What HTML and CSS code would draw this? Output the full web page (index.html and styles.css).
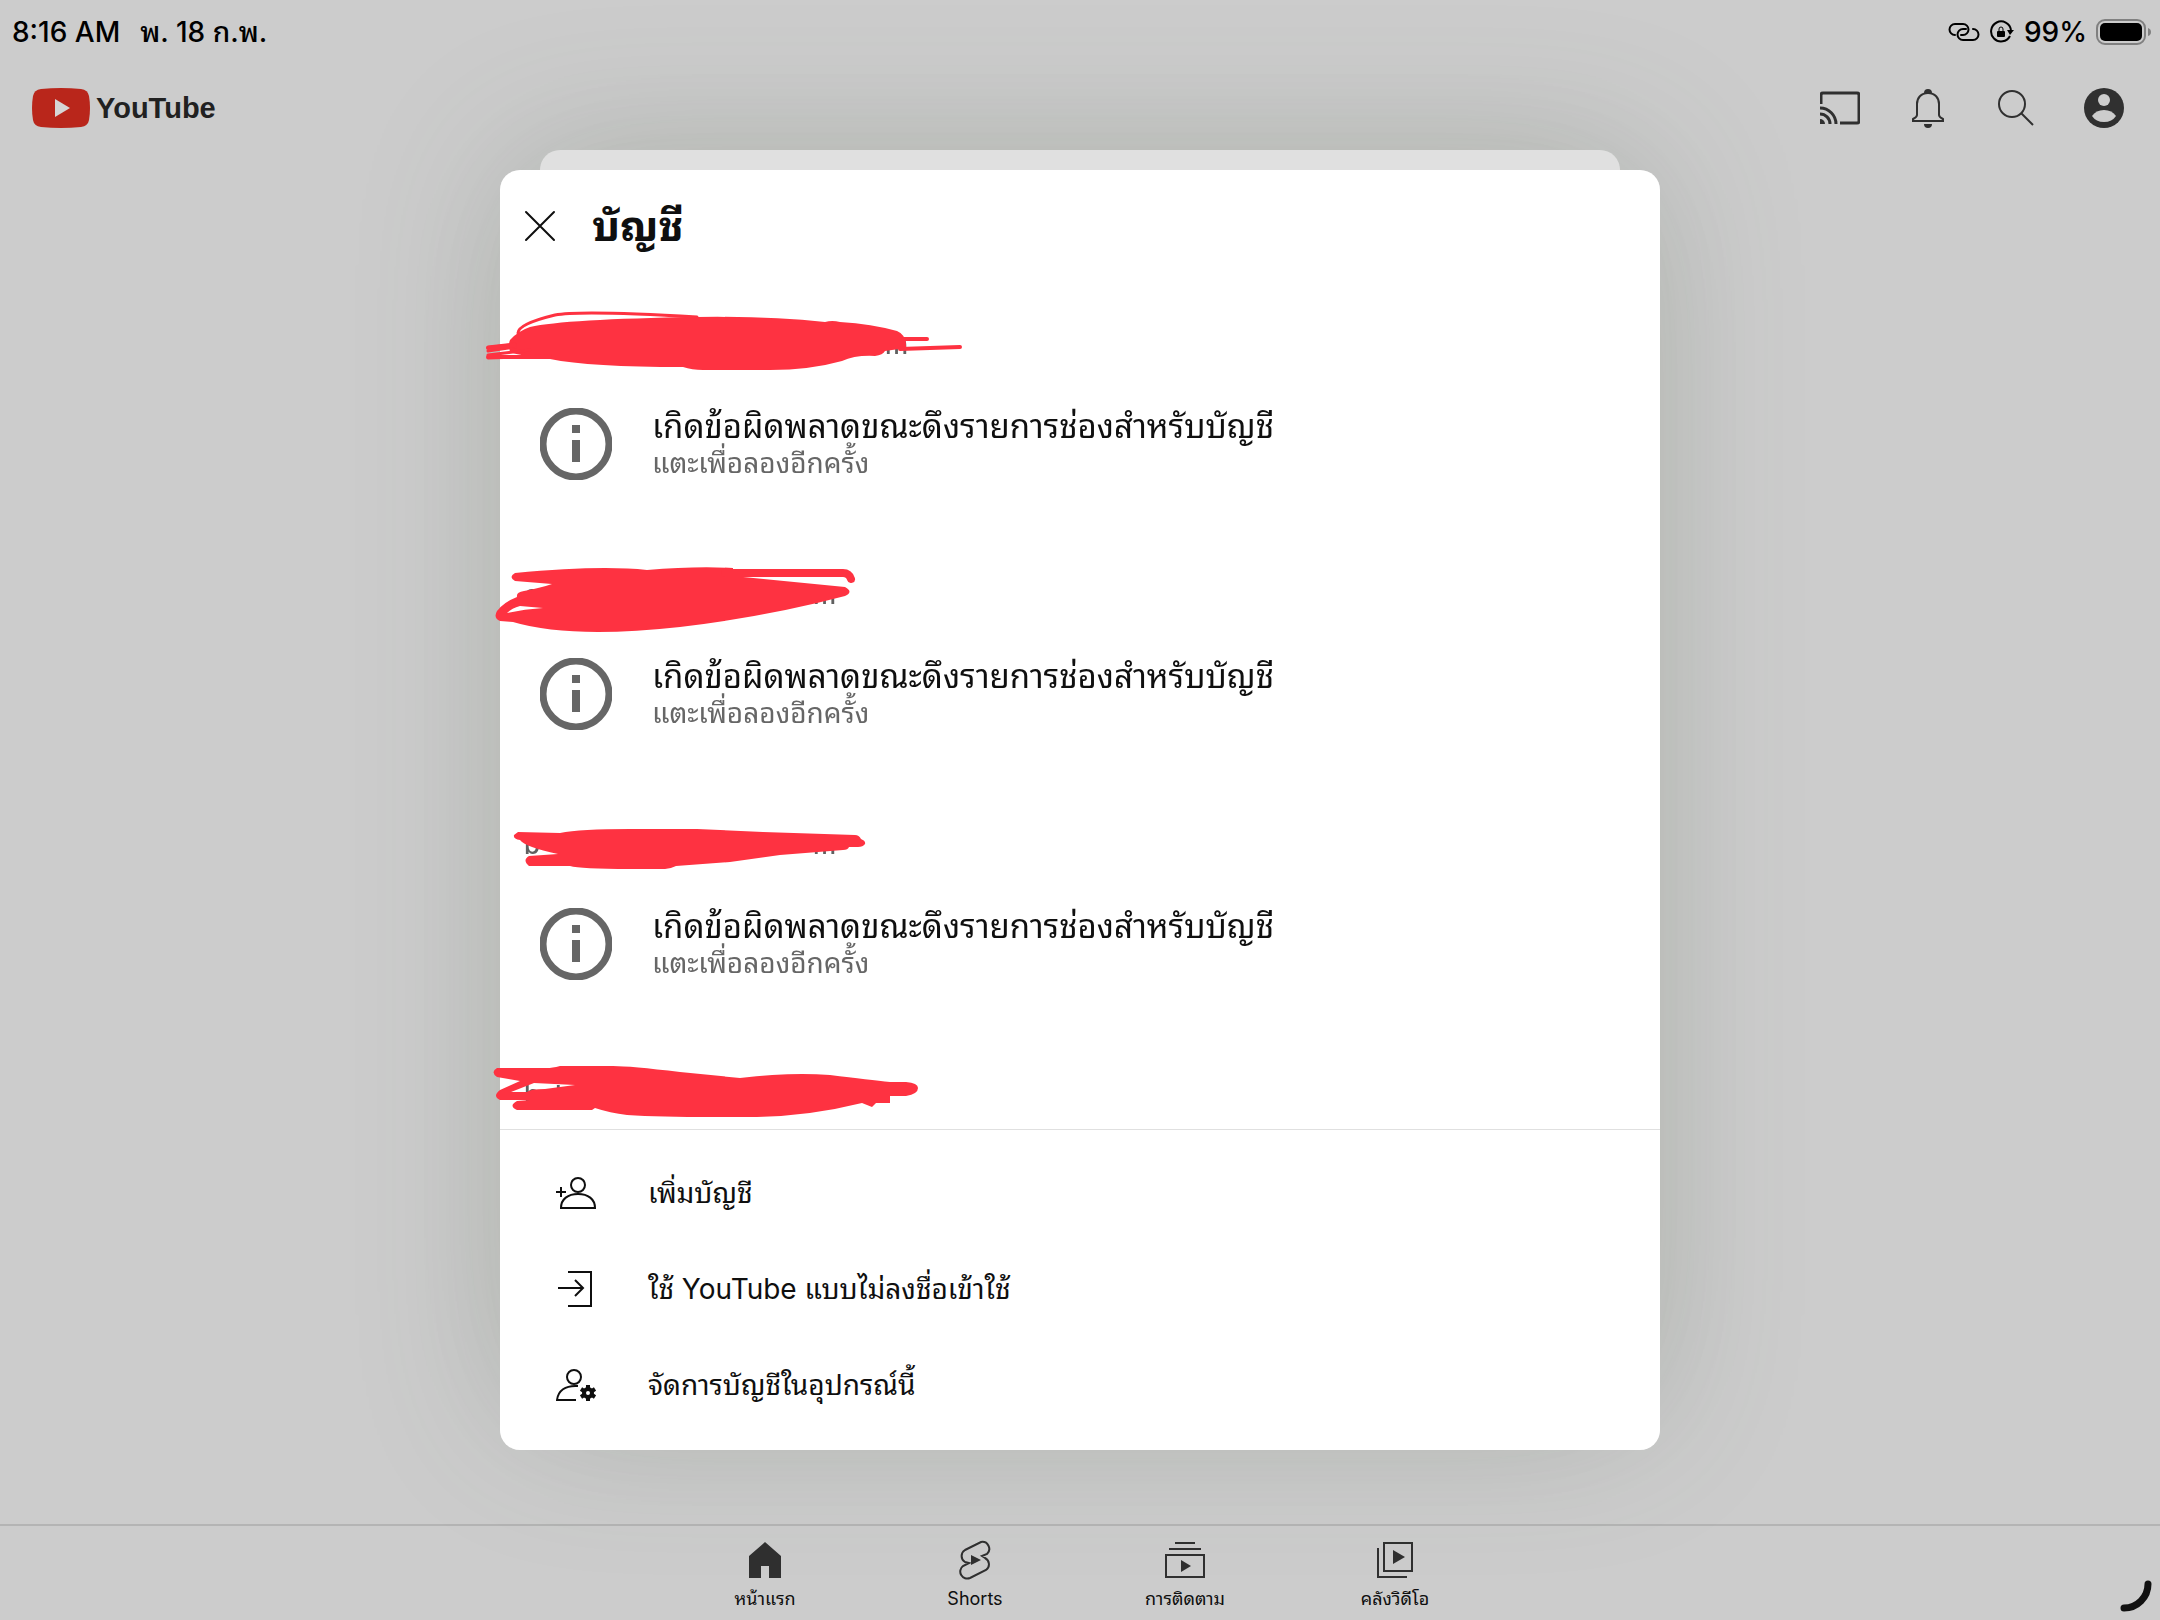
FILE: index.html
```html
<!DOCTYPE html>
<html lang="th">
<head>
  <meta charset="UTF-8">
  <meta name="viewport" content="width=device-width, initial-scale=1">
  <title>YouTube - บัญชี</title>
  <link rel="stylesheet" href="styles.css">
</head>
<body>

<!-- status bar -->
<div class="status">
  <div class="status-side status-left">
    <span>8:16 AM</span>
    <span>พ. 18 ก.พ.</span>
  </div>
  <div class="status-side status-right">
    <svg width="32" height="20" viewBox="0 0 32 20" fill="none" stroke="#000" stroke-width="2" stroke-linecap="round">
      <path d="M7 13A5 5 0 0 1 7 2H15A5 5 0 0 1 15 13H13"/>
      <path d="M25 7A5 5 0 0 1 25 18H15A5 5 0 0 1 15 7H18"/>
    </svg>
    <svg width="26" height="24" viewBox="0 0 26 24">
      <path d="M21 16A10 10 0 1 1 22 10" fill="none" stroke="#000" stroke-width="2"/>
      <path d="M18 10H25L21 15Z"/>
      <rect x="8" y="11" width="8" height="6" rx="1"/>
      <path d="M10 11V9a2 2 0 0 1 4 0v2" fill="none" stroke="#000" stroke-width="1"/>
    </svg>
    <span>99%</span>
    <svg width="56" height="26" viewBox="0 0 56 26">
      <rect x="1" y="1" width="48" height="24" rx="8" fill="none" stroke="#808080" stroke-width="2"/>
      <rect x="4" y="4" width="42" height="18" rx="5"/>
      <path d="M52 9Q55 10 55 13T52 17Z" fill="#808080"/>
    </svg>
  </div>
</div>

<!-- top bar -->
<header class="topbar">
  <a class="logo" href="#">
    <svg width="58" height="40" viewBox="0 0 58 40">
      <path d="M9 1Q29-1 49 1Q56 2 57 8Q59 20 57 32Q56 38 49 39Q29 41 9 39Q2 38 1 32Q-1 20 1 8Q2 2 9 1Z" fill="#b9261b"/>
      <path d="M23 11L38 20L23 29Z" fill="#d6d6d6"/>
    </svg>
    <span>YouTube</span>
  </a>
  <div class="actions">
    <button type="button" aria-label="แคสต์">
      <svg width="40" height="40" viewBox="0 0 40 40" fill="none" stroke="#303030" stroke-width="3">
        <path d="M1 16V7Q1 5 3 5H37Q39 5 39 7V33Q39 35 37 35H20"/>
        <path d="M0 20A16 16 0 0 1 16 36M0 26A10 10 0 0 1 10 36"/>
        <path d="M0 31A5 5 0 0 1 5 36H0Z" fill="#303030" stroke="none"/>
      </svg>
    </button>
    <button type="button" aria-label="การแจ้งเตือน">
      <svg width="40" height="40" viewBox="0 0 40 40" fill="none" stroke="#303030" stroke-width="2">
        <path d="M20 5C13 5 9 10 9 16V27Q9 29 5 31V33H35V31Q31 29 31 27V16C31 10 27 5 20 5Z"/>
        <path d="M16 5A4 4 0 0 1 24 5ZM16 36H24A4 4 0 0 1 16 36Z" fill="#303030" stroke="none"/>
      </svg>
    </button>
    <button type="button" aria-label="ค้นหา">
      <svg width="40" height="40" viewBox="0 0 40 40" fill="none" stroke="#303030" stroke-width="2">
        <circle cx="16" cy="16" r="13"/>
        <path d="M25 25L37 37"/>
      </svg>
    </button>
    <button type="button" aria-label="บัญชี">
      <svg width="40" height="40" viewBox="0 0 40 40">
        <circle cx="20" cy="20" r="20" fill="#303030"/>
        <circle cx="20" cy="12" r="6" fill="#ccc"/>
        <path d="M8 28Q12 22 20 22T32 28Q28 34 20 34T8 28Z" fill="#ccc"/>
      </svg>
    </button>
  </div>
</header>

<main class="feed"></main>

<!-- bottom tabs -->
<nav class="tabs">
  <a class="tab" href="#">
    <svg width="40" height="40" viewBox="0 0 40 40" fill="#303030">
      <path d="M20 2L36 16V38H24V26H16V38H4V16Z"/>
    </svg>
    <span>หน้าแรก</span>
  </a>
  <a class="tab" href="#">
    <svg width="40" height="40" viewBox="0 0 40 40">
      <path d="M10 10L26 2A7 7 0 0 1 32 14L27 16L30 18A7 7 0 0 1 31 30L15 38A7 7 0 0 1 8 26L14 23L10 22A7 7 0 0 1 10 10Z" fill="none" stroke="#303030" stroke-width="2"/>
      <path d="M16 15L26 20L16 25Z" fill="#303030"/>
    </svg>
    <span>Shorts</span>
  </a>
  <a class="tab" href="#">
    <svg width="40" height="40" viewBox="0 0 40 40">
      <path d="M10 3H30M4 9H36M1 15H39V37H1Z" fill="none" stroke="#303030" stroke-width="2"/>
      <path d="M16 20L26 26L16 32Z" fill="#303030"/>
    </svg>
    <span>การติดตาม</span>
  </a>
  <a class="tab" href="#">
    <svg width="40" height="40" viewBox="0 0 40 40">
      <path d="M9 3H37V31H9ZM3 8V37H32" fill="none" stroke="#303030" stroke-width="2"/>
      <path d="M18 10L30 17L18 24Z" fill="#303030"/>
    </svg>
    <span>คลังวิดีโอ</span>
  </a>
</nav>

<svg class="corner" width="32" height="32" viewBox="0 0 32 32">
  <path d="M28 4A24 24 0 0 1 4 28" fill="none" stroke="#111" stroke-width="7" stroke-linecap="round"/>
</svg>

<!-- accounts sheet -->
<div class="overlay">
  <div class="stack">
    <section class="sheet" role="dialog" aria-labelledby="sheetTitle">
      <div class="sheet-head">
        <button type="button" aria-label="ปิด">
          <svg width="32" height="32" viewBox="0 0 32 32" fill="none" stroke="#0f0f0f" stroke-width="2" stroke-linecap="round">
            <path d="M2 2L30 30M30 2L2 30"/>
          </svg>
        </button>
        <h1 id="sheetTitle">บัญชี</h1>
      </div>

      <div class="account">
        <p class="email email-long"><span>p</span><span>m</span></p>
        <svg class="marker" width="520" height="80" viewBox="0 0 520 80">
          <path d="M40 30Q48 21 60 17Q95 9 227 7Q300 6 355 12Q362 10 370 12Q402 14 427 21Q437 25 436 38L415 41Q413 45 405 46Q385 45 372 51Q340 60 300 60H233Q222 60 213 57Q120 57 80 49Q50 46 40 42Q38 34 40 30Z"/>
          <path class="line thin" d="M48 23Q48 14 85 5Q110 0 227 7M18 37L45 34M18 41L45 37M18 48L80 46M18 45L60 40"/>
          <path class="line" d="M433 29H457M430 39L490 37M18 38L45 35M18 47L80 47"/>
        </svg>
        <button type="button" class="retry">
          <svg width="72" height="72" viewBox="0 0 72 72">
            <circle cx="36" cy="36" r="33" fill="none" stroke="#666" stroke-width="7"/>
            <path d="M32 17H40V25H32ZM32 32H40V54H32Z" fill="#666"/>
          </svg>
          <span class="retry-text">
            <span class="retry-title">เกิดข้อผิดพลาดขณะดึงรายการช่องสำหรับบัญชี</span>
            <span class="retry-sub">แตะเพื่อลองอีกครั้ง</span>
          </span>
        </button>
      </div>

      <div class="account">
        <p class="email email-short"><span>e</span><span>m</span></p>
        <svg class="marker" width="520" height="80" viewBox="0 0 520 80">
          <path d="M45 13Q130 5 177 10Q225 6 263 8V16L375 27Q384 32 375 36Q300 56 210 67Q100 79 43 62L30 61Q23 58 27 51Q34 42 47 37Q46 32 54 31Q70 28 82 24L45 21Q38 17 45 13ZM37 53Q42 48 50 46L73 48Q55 49 37 53Z" fill-rule="evenodd"/>
          <path class="line thick" d="M255 13H373Q379 13 381 19"/>
        </svg>
        <button type="button" class="retry">
          <svg width="72" height="72" viewBox="0 0 72 72">
            <circle cx="36" cy="36" r="33" fill="none" stroke="#666" stroke-width="7"/>
            <path d="M32 17H40V25H32ZM32 32H40V54H32Z" fill="#666"/>
          </svg>
          <span class="retry-text">
            <span class="retry-title">เกิดข้อผิดพลาดขณะดึงรายการช่องสำหรับบัญชี</span>
            <span class="retry-sub">แตะเพื่อลองอีกครั้ง</span>
          </span>
        </button>
      </div>

      <div class="account">
        <p class="email email-short"><span>b</span><span>m</span></p>
        <svg class="marker" width="520" height="80" viewBox="0 0 520 80">
          <path d="M48 22L90 23Q110 19 160 19H227L293 22L385 25Q389 25 391 29Q396 31 395 34Q393 37 388 37H379Q378 40 373 40L310 45L260 52L206 56Q200 59 195 59H160Q110 59 100 56H59Q52 50 59 46L88 44Q55 37 50 30Q43 29 44 25Z"/>
        </svg>
        <button type="button" class="retry">
          <svg width="72" height="72" viewBox="0 0 72 72">
            <circle cx="36" cy="36" r="33" fill="none" stroke="#666" stroke-width="7"/>
            <path d="M32 17H40V25H32ZM32 32H40V54H32Z" fill="#666"/>
          </svg>
          <span class="retry-text">
            <span class="retry-title">เกิดข้อผิดพลาดขณะดึงรายการช่องสำหรับบัญชี</span>
            <span class="retry-sub">แตะเพื่อลองอีกครั้ง</span>
          </span>
        </button>
      </div>

      <div class="account account-last">
        <p class="email"><span>bal</span></p>
        <svg class="marker" width="520" height="80" viewBox="0 0 520 80">
          <path d="M27 8H77Q82 8 90 6H143Q160 6 210 12L270 18Q320 12 360 15Q400 20 420 22H436Q448 23 448 28Q448 34 436 36H420V43H406L402 47L392 43Q340 56 287 57H243Q190 57 157 55Q140 53 125 48L122 50H47Q38 46 47 41L60 40H30Q22 36 30 30L50 21L27 17Q20 12 27 8ZM41 32L64 23L105 25L75 29Q60 29 57 32Z" fill-rule="evenodd"/>
        </svg>
      </div>

      <div class="menu">
        <button type="button" class="menu-item">
          <svg width="40" height="40" viewBox="0 0 40 40" fill="none" stroke="#0f0f0f" stroke-width="2">
            <circle cx="22" cy="12" r="7"/>
            <path d="M5 35C5 26 12 21 22 21S39 26 39 35ZM5 14V24M0 19H10"/>
          </svg>
          <span>เพิ่มบัญชี</span>
        </button>
        <button type="button" class="menu-item">
          <svg width="40" height="40" viewBox="0 0 40 40" fill="none" stroke="#0f0f0f" stroke-width="2">
            <path d="M12 3H35V37H12M2 19H27M19 11L27 19L19 27"/>
          </svg>
          <span>ใช้ YouTube แบบไม่ลงชื่อเข้าใช้</span>
        </button>
        <button type="button" class="menu-item">
          <svg width="40" height="40" viewBox="0 0 40 40" fill="none" stroke="#0f0f0f" stroke-width="2">
            <circle cx="18" cy="12" r="7"/>
            <path d="M20 35H1C2 26 9 20 22 21"/>
            <circle cx="32" cy="28" r="4" stroke-width="4"/>
            <path d="M32 20V24M32 32V36M25 24L28 26M36 30L39 32M25 32L28 30M36 26L39 24" stroke-width="4"/>
          </svg>
          <span>จัดการบัญชีในอุปกรณ์นี้</span>
        </button>
      </div>
    </section>
  </div>
</div>

</body>
</html>
```
FILE: styles.css
```css
* {
  box-sizing: border-box;
}

body {
  margin: 0;
  min-height: 100vh;
  display: flex;
  flex-direction: column;
  background-color: #ccc;
  color: #0f0f0f;
  font-family: Inter, "Noto Sans Thai Looped", "Noto Sans Thai", "Noto Sans", sans-serif;
}

button {
  padding: 0;
  border: none;
  background: none;
  color: inherit;
  font: inherit;
  text-align: left;
  cursor: pointer;
}

a {
  color: inherit;
  text-decoration: none;
}

svg {
  display: block;
  flex: none;
}

/* status bar */
.status {
  display: flex;
  justify-content: space-between;
  align-items: center;
  height: 64px;
  padding: 0 8px 0 12px;
  color: #000;
  font-size: 28px;
  font-weight: 500;
  line-height: 34px;
}

.status-side {
  display: flex;
  align-items: center;
  gap: 20px;
}

.status-left {
  align-items: baseline;
}

.status-right {
  gap: 9px;
}

/* top bar */
.topbar {
  display: flex;
  justify-content: space-between;
  align-items: center;
  height: 88px;
  padding: 0 36px 0 32px;
}

.logo {
  display: flex;
  align-items: center;
  gap: 6px;
  color: #212121;
  font-family: "Liberation Sans Narrow", "Liberation Sans", sans-serif;
  font-size: 29px;
  font-weight: 700;
}

.actions {
  display: flex;
  gap: 48px;
}

.feed {
  flex: 1;
}

/* bottom tabs */
.tabs {
  display: flex;
  justify-content: center;
  height: 96px;
  border-top: 2px solid #b4b4b4;
}

.tab {
  display: flex;
  flex-direction: column;
  align-items: center;
  gap: 7px;
  width: 210px;
  padding-top: 14px;
  font-size: 18px;
  line-height: 24px;
}

.corner {
  position: fixed;
  right: 8px;
  bottom: 8px;
}

/* accounts sheet */
.overlay {
  position: fixed;
  inset: 0;
  display: flex;
  justify-content: center;
  align-items: center;
}

.stack {
  position: relative;
  width: 90%;
  max-width: 1160px;
  border-radius: 20px;
  box-shadow: 0 -20px 160px rgba(80, 96, 80, 0.14), 0 -20px 160px -40px rgba(70, 80, 40, 0.14);
}

/* the sheet behind */
.stack::before {
  content: "";
  position: absolute;
  inset: -20px 40px 100px;
  border-radius: 20px;
  background-color: #e0e0e0;
}

.sheet {
  position: relative;
  border-radius: 20px;
  background-color: #fff;
}

.sheet-head {
  display: flex;
  align-items: center;
  gap: 36px;
  height: 112px;
  padding: 0 24px;
}

.sheet-head h1 {
  margin: 0;
  font-size: 42px;
  font-weight: 700;
  line-height: 56px;
}

.account {
  position: relative;
  height: 250px;
  padding: 44px 24px 0;
}

.account-last {
  height: 97px;
}

.email {
  display: flex;
  justify-content: space-between;
  margin: 0 0 43px;
  color: #606060;
  font-size: 26px;
  font-weight: 500;
  line-height: 38px;
}

.email-long {
  width: 384px;
}

.email-short {
  width: 312px;
}

.marker {
  position: absolute;
  left: -30px;
  top: 28px;
  fill: #fe3241;
}

.line {
  fill: none;
  stroke: #fe3241;
  stroke-width: 4;
  stroke-linecap: round;
}

.thin {
  stroke-width: 3;
}

.thick {
  stroke-width: 8;
}

.retry {
  display: flex;
  align-items: center;
  gap: 40px;
  padding-left: 16px;
}

.retry-text {
  display: flex;
  flex-direction: column;
}

.retry-title {
  font-size: 33px;
  line-height: 38px;
}

.retry-sub {
  color: #666;
  font-size: 28px;
  line-height: 36px;
}

.menu {
  padding: 15px 0 17px;
  border-top: 1px solid #e0e0e0;
}

.menu-item {
  display: flex;
  align-items: center;
  gap: 52px;
  width: 100%;
  height: 96px;
  padding: 0 56px;
  font-size: 28px;
  line-height: 36px;
}
```
